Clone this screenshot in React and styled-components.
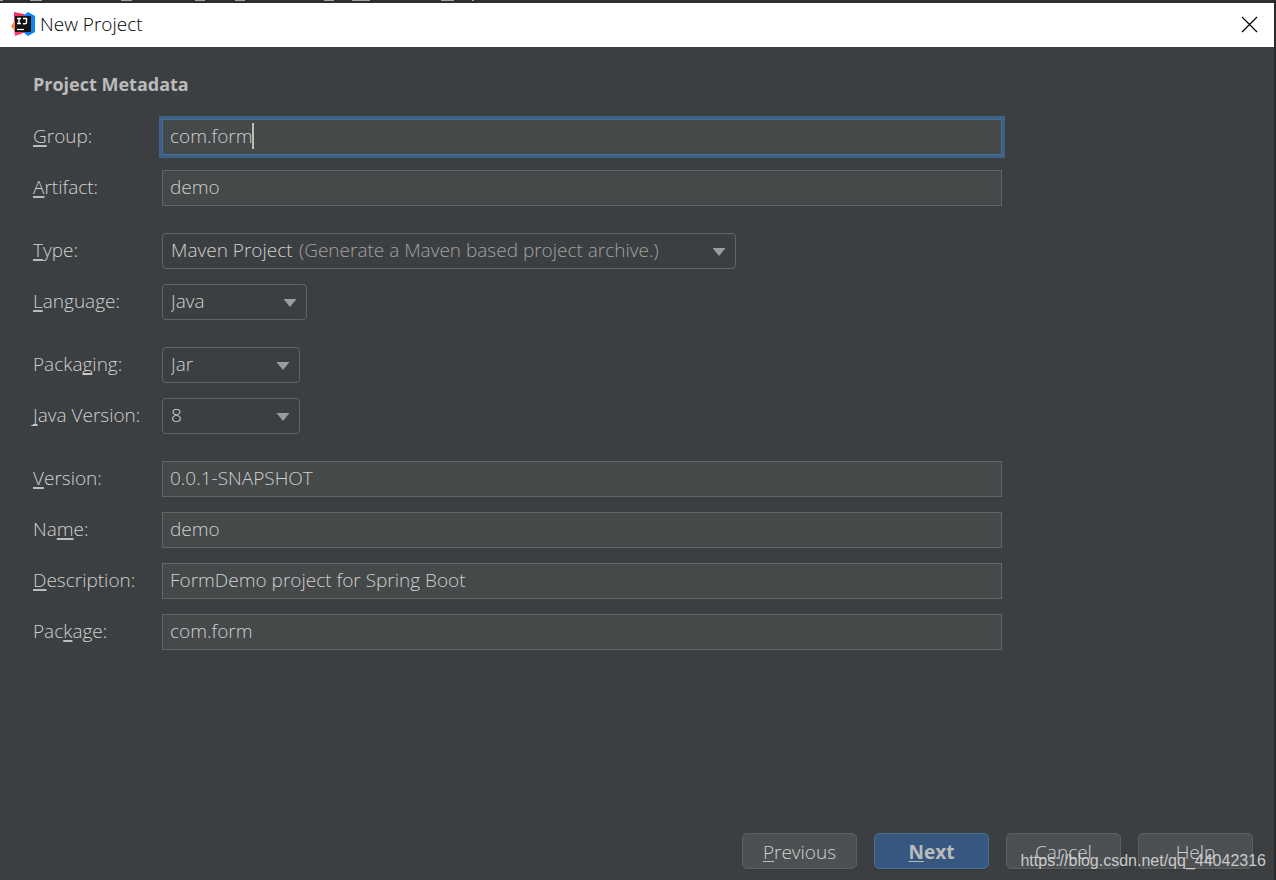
import React, { useState } from 'react';
import styled, { createGlobalStyle, css } from 'styled-components';

const GlobalStyle = createGlobalStyle`
  *, *::before, *::after {
    box-sizing: border-box;
  }
  body {
    margin: 0;
    background: #2b2b2b;
    color: #d0d0d0;
    font-family: 'Open Sans', 'Noto Sans', sans-serif;
    font-size: 19px;
    font-weight: 350;
    line-height: 24px;
  }
  button, input, select {
    font: inherit;
    color: inherit;
  }
`;

const Desktop = styled.div`
  display: flex;
  flex-direction: column;
  min-height: 100vh;
  padding-right: 2px;
`;

const EditorStrip = styled.svg`
  display: block;
  width: 100%;
  height: 3px;
`;

const Dialog = styled.div`
  flex: 1;
  display: flex;
  flex-direction: column;
  position: relative;
  background: #3c3f41;
`;

const TitleBar = styled.header`
  display: flex;
  align-items: center;
  gap: 5px;
  height: 44px;
  padding: 0 16px 2px 11px;
  background: #ffffff;
  color: #000000;
`;

const Title = styled.h1`
  flex: 1;
  margin: 0;
  font-size: 19px;
  font-weight: 350;
`;

const CloseButton = styled.button`
  display: flex;
  padding: 0;
  border: 0;
  background: none;
`;

const Form = styled.form`
  flex: 1;
  display: flex;
  flex-direction: column;
  padding: 25px 21px 11px 33px;
`;

const Heading = styled.h2`
  margin: 0 0 23px;
  color: #bbbbbb;
  font-size: 18px;
  font-weight: 700;
`;

const Fields = styled.div`
  flex: 1;
  display: flex;
  flex-direction: column;
  gap: 27px;
`;

const Group = styled.div`
  display: flex;
  flex-direction: column;
  gap: 15px;
`;

const Row = styled.div`
  display: grid;
  grid-template-columns: 129px minmax(0, 840px);
  align-items: center;
`;

const Label = styled.label`
  padding-bottom: 2px;
`;

const Mnemonic = styled.span`
  text-decoration: underline;
  text-decoration-color: #bbbbbb;
  text-decoration-thickness: ${(p) => (p.$thin ? '1px' : '2px')};
  text-underline-offset: 2px;
  text-decoration-skip-ink: none;
`;

const TextBox = styled.div`
  position: relative;
  display: flex;
`;

const TextInput = styled.input`
  width: 100%;
  height: 36px;
  padding: 0 7px 2px;
  border: 1px solid #646464;
  border-radius: 0;
  outline: none;
  background: #45494a;
  ${(p) =>
    p.$active &&
    css`
      border-color: #466d94;
      box-shadow: 0 0 0 3px #3d6185;
      caret-color: transparent;
    `}
`;

const Caret = styled.span`
  position: absolute;
  top: 4px;
  left: 7px;
  height: 26px;
  border-right: 2px solid #bbbbbb;
  color: transparent;
  pointer-events: none;
`;

const SelectBox = styled.div`
  position: relative;
  width: ${(p) => p.$width};
  max-width: 100%;
`;

const Select = styled.select`
  display: block;
  width: 100%;
  height: 36px;
  padding: 0 36px 2px 8px;
  appearance: none;
  border: 1px solid #646464;
  border-radius: 4px;
  outline: none;
  background: #3c3f41;
`;

const Hint = styled.span`
  position: absolute;
  top: 5px;
  left: 137px;
  color: #a2a2a2;
  white-space: nowrap;
  pointer-events: none;
`;

const Arrow = styled.svg`
  position: absolute;
  top: 15px;
  right: 10px;
  pointer-events: none;
`;

const Footer = styled.footer`
  display: flex;
  justify-content: flex-end;
  gap: 17px;
`;

const Button = styled.button`
  width: 115px;
  height: 36px;
  padding: 1px 0 0;
  border: 1px solid ${(p) => (p.$primary ? '#4c708c' : '#5e6060')};
  border-radius: 5px;
  background: ${(p) => (p.$primary ? '#365880' : '#4c5052')};
  box-shadow: 0 1px 1px #36393a;
  color: ${(p) => (p.$primary ? '#bbbbbb' : '#d0d0d0')};
  font-weight: ${(p) => (p.$primary ? 700 : 350)};
`;

const Watermark = styled.div`
  position: absolute;
  right: 8px;
  bottom: 7px;
  color: rgba(225, 225, 225, 0.85);
  font-family: 'Liberation Sans', Arial, sans-serif;
  font-size: 16px;
  pointer-events: none;
`;

const IdeaLogo = () => (
  <svg width="24" height="24" viewBox="0 0 24 24" aria-hidden="true">
    <path d="M3 0 L13 2 L16 5 L8 19 L1 15 L3 10 Z" fill="#f5315f" />
    <path d="M0 14 L4 9 L6 19 L2 17 Z" fill="#fc8a2c" />
    <path d="M3 17 L12 17 L15 20 L4 24 Z" fill="#fb3c6b" />
    <path d="M12 4 L17 0 L24 4 L24 20 L17 24 L12 20 Z" fill="#0f82f5" />
    <rect x="4" y="4" width="16" height="16" fill="#141414" />
    <path d="M6 6.5h4M8 6.5v5M6 11.5h4M12 6.5h3.5v4q0 1.2-1.5 1.2h-2" fill="none" stroke="#fff" strokeWidth="1.4" />
    <path d="M6 17.5h7" stroke="#fff" strokeWidth="1.2" />
  </svg>
);

const mark = (text, at, thin) => (
  <>
    {text.slice(0, at)}
    <Mnemonic $thin={thin}>{text[at]}</Mnemonic>
    {text.slice(at + 1)}
  </>
);

const TextField = ({ id, label, at, value, active }) => {
  const [text, setText] = useState(value);
  return (
    <Row>
      <Label htmlFor={id}>{mark(label, at)}</Label>
      <TextBox>
        <TextInput id={id} $active={active} value={text} onChange={(e) => setText(e.target.value)} />
        {active && <Caret aria-hidden="true">{text}</Caret>}
      </TextBox>
    </Row>
  );
};

const SelectField = ({ id, label, at, options, width, hint }) => (
  <Row>
    <Label htmlFor={id}>{mark(label, at)}</Label>
    <SelectBox $width={width}>
      <Select id={id}>
        {options.map((o) => (
          <option key={o}>{o}</option>
        ))}
      </Select>
      {hint && <Hint>{hint}</Hint>}
      <Arrow width="14" height="8" viewBox="0 0 14 8" aria-hidden="true">
        <path d="M0.5 0h13L7 8z" fill="#9a9da0" />
      </Arrow>
    </SelectBox>
  </Row>
);

const App = () => (
  <Desktop>
    <GlobalStyle />
    <EditorStrip aria-hidden="true">
      <rect width="100%" height="3" fill="#2d3032" />
      <path d="M0 .5h3M30 .5h12M121 .5h11M195 .5h10M235 .5h10M324 .5h10M352 .5h18M441 .5h13M472 .5h2" stroke="#a0a3a3" />
    </EditorStrip>
    <Dialog>
      <TitleBar>
        <IdeaLogo />
        <Title>New Project</Title>
        <CloseButton type="button" aria-label="Close">
          <svg width="17" height="17" viewBox="0 0 17 17">
            <path d="M1 1l15 15M16 1L1 16" stroke="#000" strokeWidth="1.2" />
          </svg>
        </CloseButton>
      </TitleBar>
      <Form onSubmit={(e) => e.preventDefault()}>
        <Heading>Project Metadata</Heading>
        <Fields>
          <Group>
            <TextField id="group" label="Group:" at={0} value="com.form" active />
            <TextField id="artifact" label="Artifact:" at={0} value="demo" />
          </Group>
          <Group>
            <SelectField
              id="type"
              label="Type:"
              at={0}
              options={['Maven Project']}
              hint="(Generate a Maven based project archive.)"
              width="574px"
            />
            <SelectField id="language" label="Language:" at={0} options={['Java', 'Kotlin', 'Groovy']} width="145px" />
          </Group>
          <Group>
            <SelectField id="packaging" label="Packaging:" at={5} options={['Jar', 'War']} width="138px" />
            <SelectField id="java" label="Java Version:" at={0} options={['8', '11']} width="138px" />
          </Group>
          <Group>
            <TextField id="version" label="Version:" at={0} value="0.0.1-SNAPSHOT" />
            <TextField id="name" label="Name:" at={2} value="demo" />
            <TextField id="description" label="Description:" at={0} value="FormDemo project for Spring Boot" />
            <TextField id="package" label="Package:" at={3} value="com.form" />
          </Group>
        </Fields>
        <Footer>
          <Button type="button">{mark('Previous', 0, true)}</Button>
          <Button type="submit" $primary>
            {mark('Next', 0, true)}
          </Button>
          <Button type="button">Cancel</Button>
          <Button type="button">Help</Button>
        </Footer>
      </Form>
      <Watermark>https://blog.csdn.net/qq_44042316</Watermark>
    </Dialog>
  </Desktop>
);

export default App;
